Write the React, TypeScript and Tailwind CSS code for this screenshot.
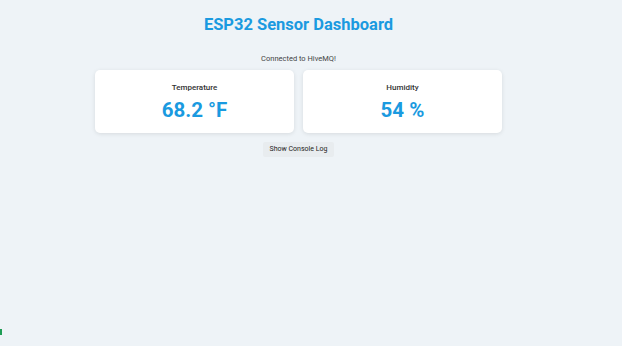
export default function App() {
  return (
    <div className="min-h-screen bg-white">
      <div
        className="relative w-[622px] h-[346px] bg-[#eef3f7]"
        style={{ fontFamily: "Roboto, 'Noto Sans', sans-serif" }}
      >
        <div className="w-[597px] flex flex-col items-center">
          <h1 className="mt-[15px] text-[16.5px] leading-[20px] font-bold text-[#1a9ae0]">
            ESP32 Sensor Dashboard
          </h1>
          <p className="mt-[19px] text-[7.5px] leading-[10px] text-[#444]">Connected to HiveMQ!</p>
          <div className="mt-[6px] flex gap-[9px]">
            {[
              { label: "Temperature", value: "68.2 °F" },
              { label: "Humidity", value: "54 %" },
            ].map(c => (
              <div
                key={c.label}
                className="w-[199px] h-[63px] bg-white rounded-[5px] shadow-[0_1px_4px_rgba(0,0,0,0.1)] flex flex-col items-center pt-[13px]"
              >
                <div className="text-[8px] leading-[10px] font-medium text-[#333]">{c.label}</div>
                <div className="mt-[5px] text-[20.5px] leading-[24px] font-bold text-[#1a9ae0]">{c.value}</div>
              </div>
            ))}
          </div>
          <button className="mt-[9px] h-[15px] px-[7px] bg-[#e8ecef] text-[7px] leading-[15px] text-[#222] rounded-[2px]">
            Show Console Log
          </button>
        </div>
        <div className="absolute left-0 top-[329px] w-[2px] h-[6px] bg-[#1f9d55]" />
      </div>
    </div>
  );
}
